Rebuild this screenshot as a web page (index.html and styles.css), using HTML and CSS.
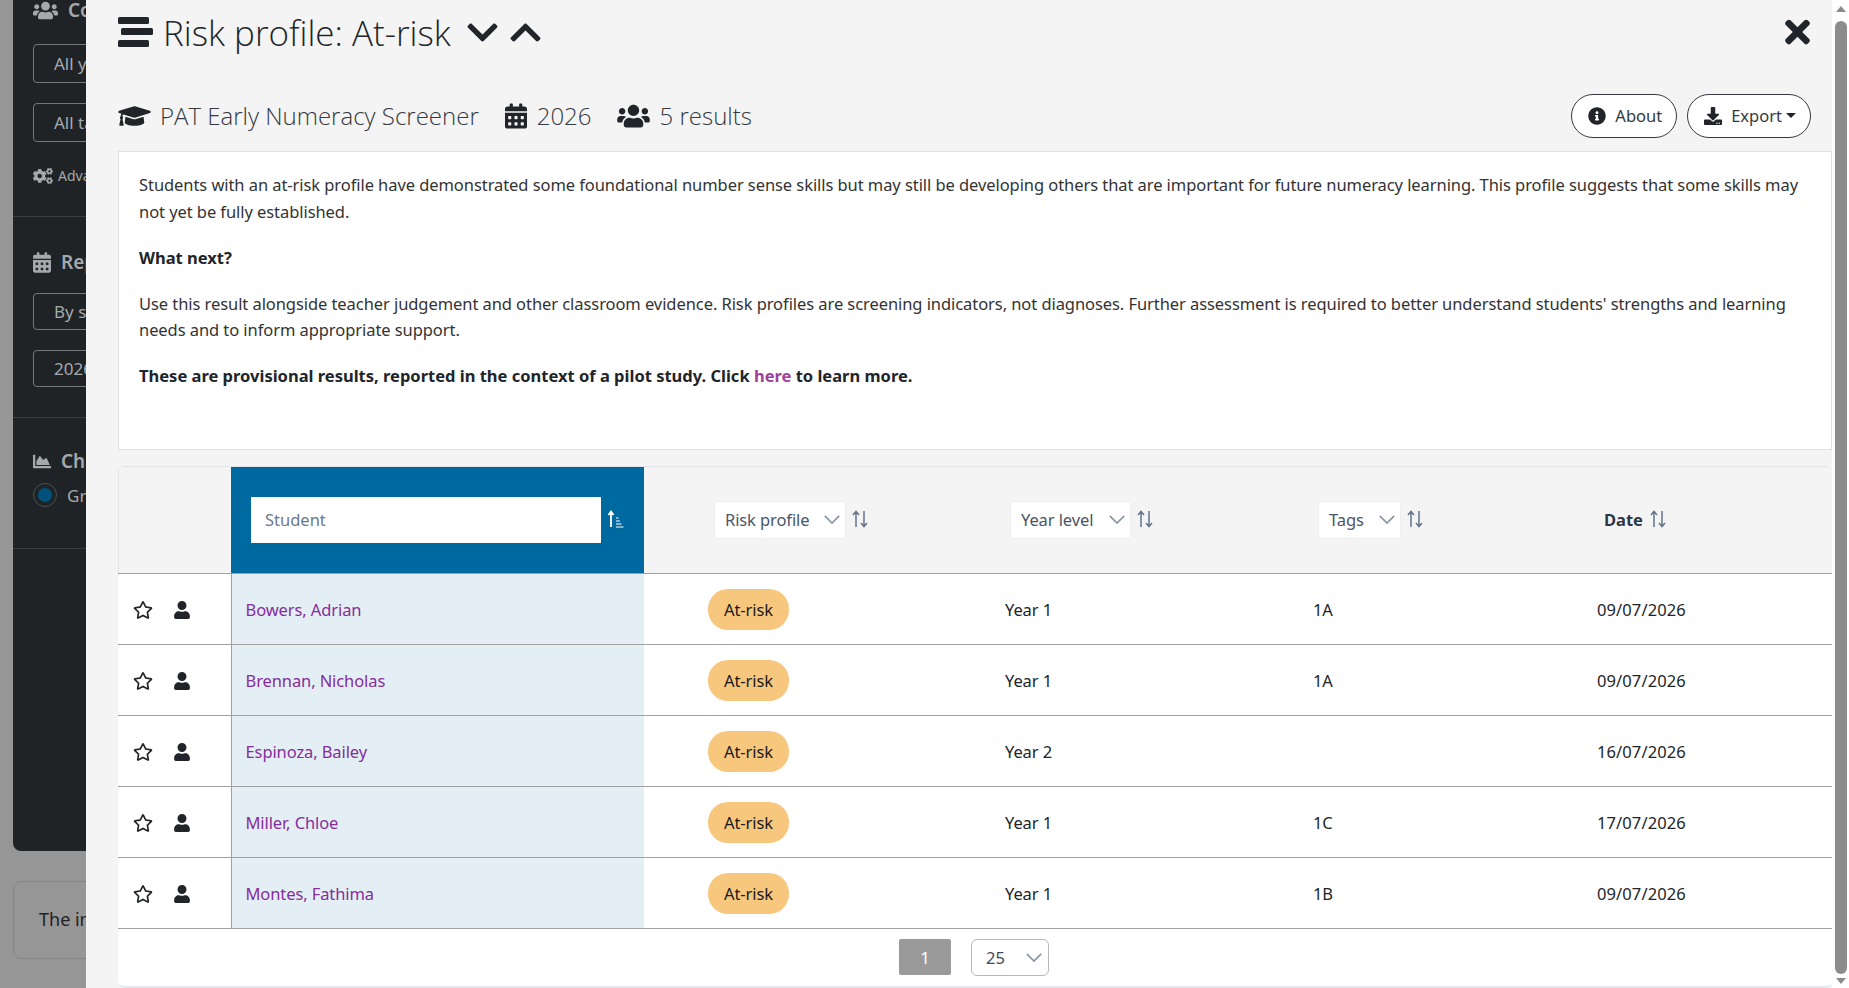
FILE: index.html

```html
<!DOCTYPE html>
<html lang="en">
<head>
    <meta charset="UTF-8">
    <meta name="viewport" content="width=device-width, initial-scale=1.0">
    <title>Risk profile: At-risk</title>
    <link rel="stylesheet" href="styles.css">
</head>
<body>
    <!-- Icon sprite -->
    <svg class="sprite" xmlns="http://www.w3.org/2000/svg">
        <symbol id="i-times" viewBox="0 0 352 512"><path d="M242.72 256l100.07-100.07c12.28-12.28 12.28-32.19 0-44.48l-22.24-22.24c-12.28-12.28-32.19-12.28-44.48 0L176 189.28 75.93 89.21c-12.28-12.28-32.19-12.28-44.48 0L9.21 111.45c-12.28 12.28-12.28 32.19 0 44.48L109.28 256 9.21 356.07c-12.28 12.28-12.28 32.19 0 44.48l22.24 22.24c12.28 12.28 32.2 12.28 44.48 0L176 322.72l100.07 100.07c12.28 12.28 32.2 12.28 44.48 0l22.24-22.24c12.28-12.28 12.28-32.19 0-44.48L242.72 256z"/></symbol>
        <symbol id="i-bars" viewBox="0 0 35 30"><rect x="0" y="0" width="31" height="7" rx="1.500"/><rect x="3" y="11" width="32" height="7" rx="1.500"/><rect x="0" y="23" width="31" height="7" rx="1.500"/></symbol>
        <symbol id="i-down" viewBox="0 0 448 512"><path d="M207.029 381.476L12.686 187.132c-9.373-9.373-9.373-24.569 0-33.941l22.667-22.667c9.357-9.357 24.522-9.375 33.901-.04L224 284.505l154.745-154.021c9.379-9.335 24.544-9.317 33.901.04l22.667 22.667c9.373 9.373 9.373 24.569 0 33.941L240.971 381.476c-9.373 9.372-24.569 9.372-33.942 0z"/></symbol>
        <symbol id="i-up" viewBox="0 0 448 512"><path d="M240.971 130.524l194.343 194.343c9.373 9.373 9.373 24.569 0 33.941l-22.667 22.667c-9.357 9.357-24.522 9.375-33.901.04L224 227.495 69.255 381.516c-9.379 9.335-24.544 9.317-33.901-.04l-22.667-22.667c-9.373-9.373-9.373-24.569 0-33.941L207.03 130.525c9.372-9.373 24.568-9.373 33.941-.001z"/></symbol>
        <symbol id="i-cap" viewBox="0 0 640 512"><path d="M622.34 153.2L343.4 67.5c-15.2-4.67-31.6-4.67-46.79 0L17.66 153.2c-23.54 7.23-23.54 38.36 0 45.59l48.63 14.94c-10.67 13.19-17.23 29.28-17.88 46.9C38.78 266.15 32 276.11 32 288c0 10.78 5.68 19.85 13.86 25.65L20.33 428.53C18.11 438.52 25.71 448 35.94 448h56.11c10.24 0 17.84-9.48 15.62-19.47L82.14 313.65C90.32 307.85 96 298.78 96 288c0-11.57-6.47-21.25-15.66-26.87.76-15.02 8.44-28.3 20.69-36.72L296.6 284.5c9.06 2.78 26.44 6.25 46.79 0l278.95-85.7c23.55-7.24 23.55-38.36 0-45.6zM352.79 315.09c-28.53 8.76-52.84 3.92-65.59 0l-145.02-44.55L128 384c0 35.35 85.96 64 192 64s192-28.65 192-64l-14.18-113.47-145.03 44.56z"/></symbol>
        <symbol id="i-calendar" viewBox="0 0 448 512"><path d="M0 464c0 26.5 21.5 48 48 48h352c26.5 0 48-21.5 48-48V192H0v272zm320-196c0-6.6 5.4-12 12-12h40c6.6 0 12 5.4 12 12v40c0 6.6-5.4 12-12 12h-40c-6.6 0-12-5.4-12-12v-40zm0 128c0-6.6 5.4-12 12-12h40c6.6 0 12 5.4 12 12v40c0 6.6-5.4 12-12 12h-40c-6.6 0-12-5.4-12-12v-40zM192 268c0-6.6 5.4-12 12-12h40c6.6 0 12 5.4 12 12v40c0 6.6-5.4 12-12 12h-40c-6.6 0-12-5.4-12-12v-40zm0 128c0-6.6 5.4-12 12-12h40c6.6 0 12 5.4 12 12v40c0 6.6-5.4 12-12 12h-40c-6.6 0-12-5.4-12-12v-40zM64 268c0-6.6 5.4-12 12-12h40c6.6 0 12 5.4 12 12v40c0 6.6-5.4 12-12 12H76c-6.6 0-12-5.4-12-12v-40zm0 128c0-6.6 5.4-12 12-12h40c6.6 0 12 5.4 12 12v40c0 6.6-5.4 12-12 12H76c-6.6 0-12-5.4-12-12v-40zM400 64h-48V16c0-8.8-7.2-16-16-16h-32c-8.8 0-16 7.2-16 16v48H160V16c0-8.8-7.2-16-16-16h-32c-8.8 0-16 7.2-16 16v48H48C21.5 64 0 85.5 0 112v48h448v-48c0-26.5-21.5-48-48-48z"/></symbol>
        <symbol id="i-users" viewBox="0 0 640 512"><path d="M96 224c35.3 0 64-28.7 64-64s-28.7-64-64-64-64 28.7-64 64 28.7 64 64 64zm448 0c35.3 0 64-28.7 64-64s-28.7-64-64-64-64 28.7-64 64 28.7 64 64 64zm32 32h-64c-17.6 0-33.5 7.1-45.1 18.6 40.3 22.1 68.9 62 75.1 109.4h66c17.7 0 32-14.3 32-32v-32c0-35.3-28.7-64-64-64zm-256 0c61.9 0 112-50.1 112-112S381.9 32 320 32 208 82.1 208 144s50.1 112 112 112zm76.8 32h-8.3c-20.8 10-43.9 16-68.5 16s-47.6-6-68.5-16h-8.3C179.6 288 128 339.6 128 403.2V432c0 26.5 21.5 48 48 48h288c26.5 0 48-21.5 48-48v-28.8c0-63.6-51.6-115.2-115.2-115.2zm-223.7-13.4C161.5 263.1 145.6 256 128 256H64c-35.3 0-64 28.7-64 64v32c0 17.7 14.3 32 32 32h65.9c6.3-47.4 34.9-87.3 75.2-109.4z"/></symbol>
        <symbol id="i-info" viewBox="0 0 512 512"><path d="M256 8C119.043 8 8 119.083 8 256c0 136.997 111.043 248 248 248s248-111.003 248-248C504 119.083 392.957 8 256 8zm0 110c23.196 0 42 18.804 42 42s-18.804 42-42 42-42-18.804-42-42 18.804-42 42-42zm56 254c0 6.627-5.373 12-12 12h-88c-6.627 0-12-5.373-12-12v-24c0-6.627 5.373-12 12-12h12v-64h-12c-6.627 0-12-5.373-12-12v-24c0-6.627 5.373-12 12-12h64c6.627 0 12 5.373 12 12v100h12c6.627 0 12 5.373 12 12v24z"/></symbol>
        <symbol id="i-download" viewBox="0 0 512 512"><path d="M216 0h80c13.3 0 24 10.7 24 24v168h87.7c17.8 0 26.7 21.5 14.1 34.1L269.7 378.3c-7.5 7.5-19.8 7.5-27.3 0L90.1 226.1c-12.6-12.6-3.7-34.1 14.1-34.1H192V24c0-13.3 10.7-24 24-24zm296 376v112c0 13.3-10.7 24-24 24H24c-13.3 0-24-10.7-24-24V376c0-13.3 10.7-24 24-24h146.7l49 49c20.1 20.1 52.5 20.1 72.6 0l49-49H488c13.3 0 24 10.7 24 24zm-124 88c0-11-9-20-20-20s-20 9-20 20 9 20 20 20 20-9 20-20zm64 0c0-11-9-20-20-20s-20 9-20 20 9 20 20 20 20-9 20-20z"/></symbol>
        <symbol id="i-star" viewBox="0 0 576 512"><path d="M528.1 171.5L382 150.2 316.7 17.8c-11.7-23.6-45.6-23.9-57.4 0L194 150.2 47.9 171.5c-26.2 3.8-36.7 36.1-17.7 54.6l105.7 103-25 145.5c-4.5 26.3 23.2 46 46.4 33.7L288 439.6l130.7 68.7c23.2 12.2 50.9-7.4 46.4-33.7l-25-145.5 105.7-103c19-18.5 8.5-50.8-17.7-54.6zM388.6 312.3l23.7 138.4L288 385.4l-124.3 65.3 23.7-138.4-100.6-98 139-20.2 62.2-126 62.2 126 139 20.2-100.6 98z"/></symbol>
        <symbol id="i-user" viewBox="0 0 448 512"><path d="M224 256c70.7 0 128-57.3 128-128S294.7 0 224 0 96 57.3 96 128s57.3 128 128 128zm89.6 32h-16.7c-22.2 10.2-46.9 16-72.9 16s-50.6-5.8-72.9-16h-16.7C60.2 288 0 348.2 0 422.4V464c0 26.5 21.5 48 48 48h352c26.5 0 48-21.5 48-48v-41.6c0-74.2-60.2-134.4-134.4-134.4z"/></symbol>
        <symbol id="i-chart" viewBox="0 0 512 512"><path d="M500 384c6.6 0 12 5.4 12 12v40c0 6.6-5.4 12-12 12H12c-6.6 0-12-5.4-12-12V76c0-6.6 5.4-12 12-12h40c6.6 0 12 5.4 12 12v308h436zM372.7 159.5L288 216l-85.3-113.7c-5.1-6.8-15.5-6.3-19.9 1L96 248v104h384l-89.9-187.8c-3.2-6.5-11.4-8.7-17.4-4.7z"/></symbol>
        <symbol id="i-cogs" viewBox="0 0 640 512"><path d="M512.1 191l-8.2 14.3c-3 5.3-9.4 7.5-15.1 5.4-11.8-4.4-22.6-10.7-32.1-18.6-4.6-3.8-5.8-10.5-2.8-15.7l8.2-14.3c-6.9-8-12.3-17.3-15.9-27.4h-16.5c-6 0-11.2-4.3-12.2-10.3-2-12-2.1-24.6 0-37.1 1-6 6.2-10.4 12.2-10.4h16.5c3.6-10.1 9-19.4 15.9-27.4l-8.2-14.3c-3-5.2-1.9-11.9 2.8-15.7 9.5-7.9 20.4-14.2 32.1-18.6 5.7-2.1 12.1.1 15.1 5.4l8.2 14.3c10.5-1.9 21.2-1.9 31.7 0L552 6.3c3-5.3 9.4-7.5 15.1-5.4 11.8 4.4 22.6 10.7 32.1 18.6 4.6 3.8 5.8 10.5 2.8 15.7l-8.2 14.3c6.9 8 12.3 17.3 15.9 27.4h16.5c6 0 11.2 4.3 12.2 10.3 2 12 2.1 24.6 0 37.1-1 6-6.2 10.4-12.2 10.4h-16.5c-3.6 10.1-9 19.4-15.9 27.4l8.2 14.3c3 5.2 1.9 11.9-2.8 15.7-9.5 7.9-20.4 14.2-32.1 18.6-5.7 2.1-12.1-.1-15.1-5.4l-8.2-14.3c-10.4 1.9-21.2 1.9-31.7 0zm-10.5-58.8c38.5 29.6 82.4-14.3 52.8-52.8-38.5-29.7-82.4 14.3-52.8 52.8zM386.3 286.1l33.7 16.8c10.1 5.8 14.5 18.1 10.5 29.1-8.9 24.2-26.4 46.4-42.6 65.8-7.4 8.9-20.2 11.1-30.3 5.3l-29.1-16.8c-16 13.7-34.6 24.6-54.9 31.7v33.6c0 11.6-8.3 21.6-19.7 23.6-24.6 4.2-50.4 4.4-75.9 0-11.5-2-20-11.9-20-23.6V418c-20.3-7.2-38.9-18-54.9-31.7L74 403c-10 5.8-22.9 3.6-30.3-5.3-16.2-19.4-33.3-41.6-42.2-65.7-4-10.9.4-23.2 10.5-29.1l33.3-16.8c-3.9-20.9-3.9-42.4 0-63.4L12 205.8c-10.1-5.8-14.6-18.1-10.5-29 8.9-24.2 26-46.4 42.2-65.8 7.4-8.9 20.2-11.1 30.3-5.3l29.1 16.8c16-13.7 34.6-24.6 54.9-31.7V57.1c0-11.5 8.2-21.5 19.6-23.5 24.6-4.2 50.5-4.4 76-.1 11.5 2 20 11.9 20 23.6v33.6c20.3 7.2 38.9 18 54.9 31.7l29.1-16.8c10-5.8 22.9-3.6 30.3 5.3 16.2 19.4 33.2 41.6 42.1 65.8 4 10.9.1 23.2-10 29.1l-33.7 16.8c3.9 21 3.9 42.5 0 63.5zm-117.6 21.1c59.2-77-28.7-164.9-105.7-105.7-59.2 77 28.7 164.9 105.7 105.7zm243.4 182.7l-8.2 14.3c-3 5.3-9.4 7.5-15.1 5.4-11.8-4.4-22.6-10.7-32.1-18.6-4.6-3.8-5.8-10.5-2.8-15.7l8.2-14.3c-6.9-8-12.3-17.3-15.9-27.4h-16.5c-6 0-11.2-4.3-12.2-10.3-2-12-2.1-24.6 0-37.1 1-6 6.2-10.4 12.2-10.4h16.5c3.6-10.1 9-19.4 15.9-27.4l-8.2-14.3c-3-5.2-1.9-11.9 2.8-15.7 9.5-7.9 20.4-14.2 32.1-18.6 5.7-2.1 12.1.1 15.1 5.4l8.2 14.3c10.5-1.9 21.2-1.9 31.7 0l8.2-14.3c3-5.3 9.4-7.5 15.1-5.4 11.8 4.4 22.6 10.7 32.1 18.6 4.6 3.8 5.8 10.5 2.8 15.7l-8.2 14.3c6.9 8 12.3 17.3 15.9 27.4h16.5c6 0 11.2 4.3 12.2 10.3 2 12 2.1 24.6 0 37.1-1 6-6.2 10.4-12.2 10.4h-16.5c-3.6 10.1-9 19.4-15.9 27.4l8.2 14.3c3 5.2 1.9 11.9-2.8 15.7-9.5 7.9-20.4 14.2-32.1 18.6-5.7 2.1-12.1-.1-15.1-5.4l-8.2-14.3c-10.4 1.9-21.2 1.9-31.7 0zM501.6 431c38.5 29.6 82.4-14.3 52.8-52.8-38.5-29.6-82.4 14.3-52.8 52.8z"/></symbol>
        <symbol id="i-sort" viewBox="0 0 18 18"><path d="M5 17V2M2 5l3-3.5L8 5M13 1v15M10 13l3 3.5 3-3.5" fill="none" stroke="currentColor" stroke-width="1.5"/></symbol>
        <symbol id="i-sort-asc" viewBox="0 0 18 18"><path d="M5 17V2M2.5 5L5 1.5 7.500 5" fill="none" stroke="currentColor" stroke-width="1.8"/><path d="M10 8h2.500M10 11h4M10 14h5.500M10 17h7.500" fill="none" stroke="currentColor" stroke-width="1.200"/></symbol>
        <symbol id="i-caret" viewBox="0 0 20 12"><path d="M2 2l8 8 8-8" fill="none" stroke="currentColor" stroke-width="1.800"/></symbol>
    </svg>

    <!-- Page behind the dialog -->
    <div class="page">
        <aside class="sidebar">
            <section class="side-group first">
                <h3 class="side-title"><svg class="side-icon wide"><use href="#i-users"/></svg>Cohort</h3>
                <div class="side-select">All years</div>
                <div class="side-select">All tags</div>
                <div class="side-adv"><svg class="adv-icon"><use href="#i-cogs"/></svg>Advanced</div>
            </section>
            <section class="side-group reports">
                <h3 class="side-title"><svg class="side-icon"><use href="#i-calendar"/></svg>Reporting</h3>
                <div class="side-select short">By school</div>
                <div class="side-select short">2026</div>
            </section>
            <section class="side-group charts">
                <h3 class="side-title"><svg class="side-icon"><use href="#i-chart"/></svg>Chart</h3>
                <div class="side-radio"><span class="radio-dot"></span>Group</div>
            </section>
        </aside>
        <div class="note">The information</div>
    </div>

    <!-- Dialog -->
    <div class="modal">
        <div class="modal-body">
            <header class="modal-head">
                <svg class="head-bars"><use href="#i-bars"/></svg>
                <h1>Risk profile: At-risk</h1>
                <svg class="head-chev"><use href="#i-down"/></svg>
                <svg class="head-chev"><use href="#i-up"/></svg>
                <svg class="head-close"><use href="#i-times"/></svg>
            </header>

            <div class="meta">
                <svg class="meta-icon wide"><use href="#i-cap"/></svg>
                <span class="meta-text first">PAT Early Numeracy Screener</span>
                <svg class="meta-icon cal"><use href="#i-calendar"/></svg>
                <span class="meta-text">2026</span>
                <svg class="meta-icon wide"><use href="#i-users"/></svg>
                <span class="meta-text">5 results</span>
                <div class="meta-actions">
                    <button class="pill-btn"><svg><use href="#i-info"/></svg>About</button>
                    <button class="pill-btn"><svg><use href="#i-download"/></svg>Export<span class="caret"></span></button>
                </div>
            </div>

            <div class="info-card">
                <p>Students with an at-risk profile have demonstrated some foundational number sense skills but may still be developing others that are important for future numeracy learning. This profile suggests that some skills may not yet be fully established.</p>
                <p><strong>What next?</strong></p>
                <p>Use this result alongside teacher judgement and other classroom evidence. Risk profiles are screening indicators, not diagnoses. Further assessment is required to better understand students' strengths and learning needs and to inform appropriate support.</p>
                <p><strong>These are provisional results, reported in the context of a pilot study. Click <a href="#">here</a> to learn more.</strong></p>
            </div>

            <div class="table-card">
                <table class="results">
                    <thead>
                        <tr>
                            <th class="col-actions"></th>
                            <th class="col-student">
                                <div class="student-filter">
                                    <input type="text" placeholder="Student">
                                    <svg class="sort-icon"><use href="#i-sort-asc"/></svg>
                                </div>
                            </th>
                            <th class="col-risk">
                                <div class="th-filter">
                                    <div class="th-select risk-select">Risk profile<svg><use href="#i-caret"/></svg></div>
                                    <svg class="sort-icon"><use href="#i-sort"/></svg>
                                </div>
                            </th>
                            <th class="col-year">
                                <div class="th-filter">
                                    <div class="th-select year-select">Year level<svg><use href="#i-caret"/></svg></div>
                                    <svg class="sort-icon"><use href="#i-sort"/></svg>
                                </div>
                            </th>
                            <th class="col-tags">
                                <div class="th-filter">
                                    <div class="th-select tags-select">Tags<svg><use href="#i-caret"/></svg></div>
                                    <svg class="sort-icon"><use href="#i-sort"/></svg>
                                </div>
                            </th>
                            <th class="col-date">
                                <div class="th-filter">
                                    <span class="th-date">Date</span>
                                    <svg class="sort-icon"><use href="#i-sort"/></svg>
                                </div>
                            </th>
                        </tr>
                    </thead>
                    <tbody>
                        <tr>
                            <td class="cell-actions"><svg class="star"><use href="#i-star"/></svg><svg class="person"><use href="#i-user"/></svg></td>
                            <td class="cell-student"><a href="#">Bowers, Adrian</a></td>
                            <td class="cell-risk"><span class="badge">At-risk</span></td>
                            <td class="cell-year">Year 1</td>
                            <td class="cell-tags">1A</td>
                            <td class="cell-date">09/07/2026</td>
                        </tr>
                        <tr>
                            <td class="cell-actions"><svg class="star"><use href="#i-star"/></svg><svg class="person"><use href="#i-user"/></svg></td>
                            <td class="cell-student"><a href="#">Brennan, Nicholas</a></td>
                            <td class="cell-risk"><span class="badge">At-risk</span></td>
                            <td class="cell-year">Year 1</td>
                            <td class="cell-tags">1A</td>
                            <td class="cell-date">09/07/2026</td>
                        </tr>
                        <tr>
                            <td class="cell-actions"><svg class="star"><use href="#i-star"/></svg><svg class="person"><use href="#i-user"/></svg></td>
                            <td class="cell-student"><a href="#">Espinoza, Bailey</a></td>
                            <td class="cell-risk"><span class="badge">At-risk</span></td>
                            <td class="cell-year">Year 2</td>
                            <td class="cell-tags"></td>
                            <td class="cell-date">16/07/2026</td>
                        </tr>
                        <tr>
                            <td class="cell-actions"><svg class="star"><use href="#i-star"/></svg><svg class="person"><use href="#i-user"/></svg></td>
                            <td class="cell-student"><a href="#">Miller, Chloe</a></td>
                            <td class="cell-risk"><span class="badge">At-risk</span></td>
                            <td class="cell-year">Year 1</td>
                            <td class="cell-tags">1C</td>
                            <td class="cell-date">17/07/2026</td>
                        </tr>
                        <tr>
                            <td class="cell-actions"><svg class="star"><use href="#i-star"/></svg><svg class="person"><use href="#i-user"/></svg></td>
                            <td class="cell-student"><a href="#">Montes, Fathima</a></td>
                            <td class="cell-risk"><span class="badge">At-risk</span></td>
                            <td class="cell-year">Year 1</td>
                            <td class="cell-tags">1B</td>
                            <td class="cell-date">09/07/2026</td>
                        </tr>
                    </tbody>
                </table>
                <div class="pager">
                    <span class="page-num">1</span>
                    <div class="page-size">25<svg><use href="#i-caret"/></svg></div>
                </div>
            </div>
        </div>

        <!-- Scrollbar -->
        <div class="scrollbar">
            <span class="arrow up"></span>
            <span class="thumb"></span>
            <span class="arrow dn"></span>
        </div>
    </div>
</body>
</html>
```

FILE: styles.css

```css
/* General styling */
html, body {
    height: 100%;
    margin: 0;
    overflow: hidden;
}

body {
    font-family: "Noto Sans", "Open Sans", Arial, sans-serif;
    font-size: 16px;
    color: #212529;
    background-color: #969696;
}

svg {
    fill: currentColor;
    display: block;
    flex: none;
}

.sprite {
    width: 0;
    height: 0;
    position: absolute;
}

/* Page behind the dialog */
.page {
    padding-left: 13px;
    height: 988px;
    box-sizing: border-box;
}

.sidebar {
    width: 200px;
    height: 853px;
    box-sizing: border-box;
    background-color: #1f2326;
    color: #a5a9ac;
    border-radius: 0 0 0 8px;
    padding-left: 20px;
}

.side-group {
    border-bottom: 1px solid #3a3d40;
    margin-left: -20px;
    padding-left: 20px;
}

.side-group.first {
    height: 219px;
    box-sizing: border-box;
}

.side-group.reports {
    height: 201px;
    padding-top: 31px;
    box-sizing: border-box;
}

.side-group.charts {
    height: 131px;
    padding-top: 29px;
    box-sizing: border-box;
}

.side-title {
    display: flex;
    align-items: center;
    gap: 10px;
    font-size: 19px;
    font-weight: 600;
    margin: 0;
    height: 28px;
    white-space: nowrap;
}

.first .side-title {
    margin-top: -2px;
    height: 24px;
    padding-bottom: 22px;
}

.side-icon {
    width: 18px;
    height: 21px;
}

.side-icon.wide {
    width: 25px;
}

.side-select {
    width: 170px;
    height: 39px;
    box-sizing: border-box;
    border: 1px solid #74777a;
    border-radius: 4px;
    padding: 0 20px;
    margin-bottom: 20px;
    display: flex;
    align-items: center;
    font-size: 17px;
}

.side-select.short {
    height: 37px;
    margin: 17px 0 20px;
}

.side-adv {
    display: flex;
    align-items: center;
    gap: 5px;
    font-size: 14px;
    margin-top: 24px;
}

.adv-icon {
    width: 20px;
    height: 16px;
}

.side-radio {
    display: flex;
    align-items: center;
    gap: 10px;
    font-size: 17px;
    margin-top: 8px;
}

.radio-dot {
    width: 14px;
    height: 14px;
    border-radius: 50%;
    background-color: #00527d;
    border: 5px solid #1f2326;
    outline: 1px solid #44525b;
    outline-offset: -1px;
}

.note {
    width: 200px;
    height: 78px;
    box-sizing: border-box;
    margin-top: 30px;
    padding: 0 25px 2px;
    border: 1px solid #858585;
    border-radius: 8px;
    display: flex;
    align-items: center;
    font-size: 18px;
    color: #222;
    white-space: nowrap;
}

/* Dialog */
.modal {
    position: fixed;
    top: 0;
    left: 86px;
    right: 0;
    bottom: 0;
    display: flex;
    background-color: #f4f4f5;
}

.modal-body {
    flex: 1;
    min-width: 0;
    padding-left: 32px;
    box-sizing: border-box;
}

.modal-head {
    height: 64px;
    display: flex;
    align-items: center;
    padding-right: 22px;
    box-sizing: border-box;
}

.modal-head h1 {
    font-family: "Open Sans", "Noto Sans", sans-serif;
    font-size: 35px;
    font-weight: 300;
    margin: 0 16px 0 10px;
    color: #212529;
    white-space: nowrap;
}

.head-bars {
    width: 35px;
    height: 30px;
}

.head-chev {
    width: 31px;
    height: 35px;
    margin-right: 12px;
}

.head-close {
    width: 25px;
    height: 36px;
    margin-left: auto;
}

.meta {
    height: 87px;
    display: flex;
    align-items: center;
    padding: 16px 21px 0 0;
    box-sizing: border-box;
}

.meta-icon {
    height: 26px;
    width: 22px;
}

.meta-icon.wide {
    width: 33px;
}

.meta-text {
    font-family: "Open Sans", "Noto Sans", sans-serif;
    font-weight: 300;
    font-size: 24px;
    margin: 0 25px 0 10px;
    white-space: nowrap;
    color: #343a40;
}

.meta-text.first {
    margin-left: 9px;
    margin-right: 26px;
}

.meta-actions {
    margin-left: auto;
    display: flex;
    gap: 10px;
}

.pill-btn {
    height: 44px;
    padding: 0 14px 0 16px;
    border: 1px solid #343a40;
    border-radius: 22px;
    background-color: #fff;
    font-family: inherit;
    font-size: 16.500px;
    color: #343a40;
    display: flex;
    align-items: center;
    gap: 9px;
}

.pill-btn svg {
    width: 18px;
    height: 18px;
    color: #212529;
}

.caret {
    width: 0;
    height: 0;
    margin-left: -5px;
    border-left: 5px solid transparent;
    border-right: 5px solid transparent;
    border-top: 5px solid #212529;
}

.info-card {
    height: 299px;
    box-sizing: border-box;
    background-color: #fff;
    border: 1px solid #dfe1e4;
    padding: 20px 20px 0 20px;
    font-size: 16.500px;
    letter-spacing: -0.07px;
    line-height: 26.500px;
    color: #333;
}

.info-card p {
    margin: 0 0 19.500px;
}

.info-card strong {
    color: #212529;
    letter-spacing: 0;
}

.info-card a {
    color: #a0409c;
    text-decoration: none;
}

/* Results table */
.table-card {
    margin-top: 16px;
    box-shadow: inset 0 1px 0 #e0e3e7;
    border-bottom: 2px solid #e3e6ea;
    border-radius: 6px;
    height: 522px;
    box-sizing: border-box;
    background-color: #fff;
    overflow: hidden;
}

.results {
    width: 100%;
    border-collapse: collapse;
    table-layout: fixed;
    margin-top: 1px;
}

.results th {
    height: 106px;
    padding: 0;
    background-color: #f4f4f5;
    border-bottom: 1px solid #a0a0a0;
    text-align: left;
    font-weight: normal;
    box-sizing: border-box;
}

.results td {
    height: 71px;
    padding: 2px 0 0;
    border-bottom: 1px solid #a0a0a0;
    box-sizing: border-box;
    font-size: 16.500px;
    letter-spacing: -0.1px;
    color: #212529;
}

.col-actions {
    width: 113px;
}

.col-student {
    width: 413px;
}

.col-risk {
    width: 305px;
}

.col-year {
    width: 308px;
}

.col-tags {
    width: 284px;
}

.results th.col-actions {
    box-shadow: inset 1px 0 0 #e0e3e7;
}

.results th.col-student {
    background-color: #0069a0;
}

.student-filter {
    display: flex;
    align-items: center;
    padding-left: 20px;
    gap: 5px;
    color: #fff;
}

.student-filter input {
    width: 350px;
    height: 46px;
    box-sizing: border-box;
    border: 0;
    padding: 0 14px;
    font-family: inherit;
    font-size: 16.500px;
    background-color: #fff;
}

.student-filter input::placeholder {
    color: #6c7a8c;
    opacity: 1;
}

.student-filter .sort-icon {
    color: #fff;
}

.th-filter {
    display: flex;
    align-items: center;
    gap: 6px;
    color: #4a5a6e;
}

.col-risk .th-filter {
    padding-left: 71px;
}

.col-year .th-filter {
    padding-left: 62px;
}

.col-tags .th-filter {
    padding-left: 62px;
}

.col-date .th-filter {
    padding-left: 63px;
}

.th-select {
    height: 36px;
    box-sizing: border-box;
    background-color: #fff;
    display: flex;
    align-items: center;
    justify-content: space-between;
    padding: 0 4px 0 10px;
    font-size: 16.500px;
    letter-spacing: -0.1px;
    color: #4a5568;
    box-shadow: 0 0 2px rgba(0, 0, 0, 0.08);
}

.th-select svg {
    width: 18px;
    height: 11px;
    color: #8794a8;
}

.risk-select {
    width: 130px;
}

.year-select {
    width: 119px;
}

.tags-select {
    width: 81px;
}

.th-date {
    font-size: 16.500px;
    font-weight: 700;
    color: #2d3748;
}

.sort-icon {
    width: 18px;
    height: 18px;
    margin-top: -2px;
    color: #64748b;
}

.results td.cell-actions {
    white-space: nowrap;
    padding: 0 0 2px;
}

.cell-actions svg {
    display: inline-block;
    vertical-align: middle;
}

.star {
    width: 20px;
    height: 18px;
    margin-left: 15px;
}

.person {
    width: 16px;
    height: 18px;
    margin-left: 21px;
}

.results td.cell-student {
    background-color: #e4eff5;
    border-left: 1px solid #a0a0a0;
    padding-left: 14px;
}

.cell-student a {
    color: #862c9b;
    text-decoration: none;
}

.results td.cell-risk {
    padding-left: 64px;
}

.results td.cell-year, .results td.cell-tags {
    padding-left: 56px;
}

.results td.cell-date {
    padding-left: 56px;
    letter-spacing: 0.1px;
}

.badge {
    display: inline-block;
    width: 81px;
    height: 41px;
    line-height: 41px;
    text-align: center;
    border-radius: 20px;
    background-color: #f8c77e;
    color: #1a1a1a;
}

.pager {
    display: flex;
    align-items: center;
    justify-content: center;
    gap: 20px;
    height: 57px;
    padding-right: 2px;
    box-sizing: border-box;
}

.page-num {
    width: 52px;
    height: 36px;
    background-color: #9a9a9a;
    color: #fff;
    border-radius: 2px;
    display: flex;
    align-items: center;
    justify-content: center;
    font-size: 17px;
}

.page-size {
    width: 78px;
    height: 37px;
    box-sizing: border-box;
    border: 1px solid #b4b8c0;
    border-radius: 6px;
    display: flex;
    align-items: center;
    justify-content: space-between;
    padding: 0 5px 0 14px;
    font-size: 16.500px;
    color: #3f4a5a;
}

.page-size svg {
    width: 18px;
    height: 11px;
    color: #8794a8;
}

/* Scrollbar */
.scrollbar {
    width: 17px;
    flex: none;
    background-color: #fff;
    display: flex;
    flex-direction: column;
    align-items: center;
    padding: 6px 0 4px;
    box-sizing: border-box;
}

.thumb {
    flex: 1;
    width: 12px;
    background-color: #8c8c8c;
    border-radius: 6px;
    margin: 9px 0 4px;
}

.arrow {
    width: 0;
    height: 0;
    border-left: 5px solid transparent;
    border-right: 5px solid transparent;
}

.arrow.up {
    border-bottom: 6px solid #8c8c8c;
}

.arrow.dn {
    border-top: 6px solid #8c8c8c;
}
```
